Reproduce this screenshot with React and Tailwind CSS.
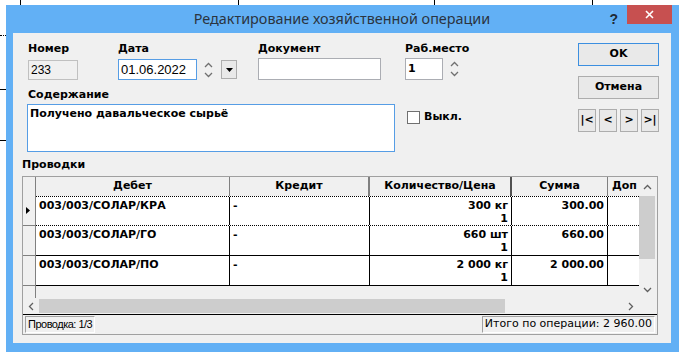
import { useState } from "react";

const rows = [
  { debit: "003/003/СОЛАР/КРА", credit: "-", qty: "300 кг", price: "1", sum: "300.00", current: true },
  { debit: "003/003/СОЛАР/ГО", credit: "-", qty: "660 шт", price: "1", sum: "660.00" },
  { debit: "003/003/СОЛАР/ПО", credit: "-", qty: "2 000 кг", price: "1", sum: "2 000.00" },
];

function Spinner() {
  return (
    <div className="flex flex-col items-center gap-[4px] pt-[3px]">
      <svg width="9" height="6" viewBox="0 0 9 6">
        <polyline points="1,5 4.5,1.5 8,5" fill="none" stroke="#707070" strokeWidth="1.3" />
      </svg>
      <svg width="9" height="6" viewBox="0 0 9 6">
        <polyline points="1,1 4.5,4.5 8,1" fill="none" stroke="#707070" strokeWidth="1.3" />
      </svg>
    </div>
  );
}

function Chevron({ dir }) {
  const pts = {
    up: "1,5 4.5,1.5 8,5",
    down: "1,1 4.5,4.5 8,1",
    left: "5,1 1.5,4.5 5,8",
    right: "1,1 4.5,4.5 1,8",
  }[dir];
  const vertical = dir === "up" || dir === "down";
  return (
    <svg width={vertical ? 9 : 6} height={vertical ? 6 : 9} viewBox={vertical ? "0 0 9 6" : "0 0 6 9"}>
      <polyline points={pts} fill="none" stroke="#606060" strokeWidth="1.3" />
    </svg>
  );
}

function Btn({ children, primary, className = "" }) {
  return (
    <button
      className={`flex items-center justify-center border bg-[#e9e9e9] text-[11px] font-bold text-black ${
        primary ? "border-[#3c8fe0]" : "border-[#adadad]"
      } ${className}`}
    >
      {children}
    </button>
  );
}

export default function App() {
  const [off, setOff] = useState(false);

  return (
    <div className="relative h-[359px] w-[684px] overflow-hidden bg-white font-['DejaVu_Sans',Verdana,sans-serif]">
      {/* grid lines of the window behind */}
      <div className="absolute left-[20px] top-0 h-[5px] w-px bg-black" />
      <div className="absolute left-[238px] top-0 h-[5px] w-px bg-black" />
      <div className="absolute left-[434px] top-0 h-[5px] w-px bg-black" />
      <div className="absolute left-[592px] top-0 h-[5px] w-px bg-black" />
      <div className="absolute left-0 top-[35px] h-px w-[6px] border-t border-dotted border-black" />
      <div className="absolute left-0 top-[89px] h-px w-[6px] bg-black" />
      <div className="absolute left-0 top-[140px] h-px w-[6px] bg-black" />

      <div className="ml-[6px] mt-[5px] flex h-[347px] w-[673px] flex-col bg-[#62b0f5] pb-[9px] pl-[7px] pr-[8px]">
        {/* title bar */}
        <div className="relative flex h-[28px] shrink-0 items-center justify-center">
          <span className="font-['Noto_Sans',sans-serif] text-[14.4px] text-[#2b3440]">
            Редактирование хозяйственной операции
          </span>
          <span className="absolute right-[53px] top-[4px] font-['Liberation_Sans',sans-serif] text-[14px] font-bold text-[#1f2a36]">?</span>
          <div className="absolute right-[-1px] top-0 flex h-[19px] w-[45px] items-center justify-center bg-[#c75050]">
            <svg width="9" height="9" viewBox="0 0 9 9">
              <path d="M1 1 L8 8 M8 1 L1 8" stroke="white" strokeWidth="1.6" />
            </svg>
          </div>
        </div>

        {/* client area */}
        <div className="flex flex-1 flex-col bg-[#f0f0f0] text-black">
          <div className="flex h-[124px] shrink-0">
            <div className="flex flex-col pl-[15px] pt-[9px]">
              <div className="flex">
                <div className="flex w-[90px] flex-col">
                  <div className="h-[16px] text-[11px] font-bold leading-[14px]">Номер</div>
                  <div className="mt-[2px] flex h-[20px] w-[50px] items-center border border-[#c0c0c0] bg-[#f0f0f0] pl-[2px] font-['Liberation_Sans',sans-serif] text-[12px]">
                    233
                  </div>
                </div>
                <div className="flex w-[140px] flex-col">
                  <div className="h-[16px] text-[11px] font-bold leading-[14px]">Дата</div>
                  <div className="mt-[1px] flex items-start">
                    <div className="flex h-[21px] w-[79px] items-center border border-[#569de5] bg-white pl-[2px] font-['Liberation_Sans',sans-serif] text-[13px]">
                      01.06.2022
                    </div>
                    <div className="ml-[6px] w-[10px]">
                      <Spinner />
                    </div>
                    <div className="ml-[8px] mt-px flex h-[19px] w-[16px] items-center justify-center border border-[#adadad] bg-[#e9e9e9]">
                      <svg width="7" height="4" viewBox="0 0 7 4">
                        <path d="M0 0 H7 L3.5 4 Z" fill="black" />
                      </svg>
                    </div>
                  </div>
                </div>
                <div className="flex w-[147px] flex-col">
                  <div className="h-[16px] text-[11px] font-bold leading-[14px]">Документ</div>
                  <div className="h-[22px] w-[123px] border border-[#abadb3] bg-white" />
                </div>
                <div className="flex flex-col">
                  <div className="h-[16px] text-[11px] font-bold leading-[14px]">Раб.место</div>
                  <div className="flex items-start">
                    <div className="flex h-[22px] w-[38px] items-center border border-[#abadb3] bg-white pl-[2px] text-[11px] font-bold">
                      1
                    </div>
                    <div className="ml-[6px] w-[10px]">
                      <Spinner />
                    </div>
                  </div>
                </div>
              </div>

              <div className="mt-[8px] h-[16px] text-[11px] font-bold leading-[14px]">Содержание</div>
              <div className="flex items-start">
                <div className="-ml-px h-[48px] w-[368px] border border-[#569de5] bg-white px-[2px] pt-[2px] text-[11px] font-bold leading-[14px]">
                  Получено давальческое сырьё
                </div>
                <label className="ml-[12px] mt-[5px] flex items-center gap-[4px] text-[11px] font-bold">
                  <button
                    onClick={() => setOff(!off)}
                    className="h-[13px] w-[13px] border border-[#707070] bg-white"
                  />
                  Выкл.
                </label>
              </div>
            </div>

            <div className="ml-auto mr-[12px] flex w-[81px] flex-col pt-[10px]">
              <Btn primary className="h-[23px]">OK</Btn>
              <Btn className="mt-[10px] h-[23px]">Отмена</Btn>
              <div className="mt-[10px] flex gap-[3px]">
                <Btn className="h-[23px] w-[18px]">|&lt;</Btn>
                <Btn className="h-[23px] w-[18px]">&lt;</Btn>
                <Btn className="h-[23px] w-[18px]">&gt;</Btn>
                <Btn className="h-[23px] w-[18px]">&gt;|</Btn>
              </div>
            </div>
          </div>

          <div className="h-[19px] pl-[9px] pt-[1px] text-[11px] font-bold leading-[14px]">Проводки</div>

          {/* grid */}
          <div className="ml-[9px] flex h-[159px] w-[636px] flex-col border border-[#a0a0a0]">
            <div className="flex h-[121px]">
              <div className="flex w-[616px] flex-col overflow-hidden">
                <div className="flex h-[19px] shrink-0 bg-[#f0f0f0] text-[11px] font-bold">
                  <div className="w-[13px] shrink-0 border-r border-[#808080]" />
                  <div className="flex w-[194px] shrink-0 items-center justify-center border-r border-[#808080]">Дебет</div>
                  <div className="flex w-[140px] shrink-0 items-center justify-center border-r-2 border-[#808080]">Кредит</div>
                  <div className="flex w-[142px] shrink-0 items-center justify-center border-r-2 border-[#505050]">Количество/Цена</div>
                  <div className="flex w-[96px] shrink-0 items-center justify-center border-r border-[#808080]">Сумма</div>
                  <div className="flex shrink-0 items-center whitespace-nowrap pl-[4px]">Доп</div>
                </div>
                {rows.map((r) => (
                  <div key={r.debit} className="flex h-[30px] shrink-0 text-[11px] font-bold leading-[13px]">
                    <div className="flex w-[13px] shrink-0 items-center border-b border-r border-[#808080] bg-[#f0f0f0] pl-[3px]">
                      {r.current && (
                        <svg width="4" height="7" viewBox="0 0 4 7">
                          <path d="M0 0 L4 3.5 L0 7 Z" fill="black" />
                        </svg>
                      )}
                    </div>
                    <div
                      className={`flex flex-1 bg-white ${
                        r.current ? "border-y border-dotted border-black" : "border-b border-black"
                      }`}
                    >
                      <div className="w-[194px] shrink-0 border-r border-black pl-[3px] pt-[2px]">{r.debit}</div>
                      <div className="w-[140px] shrink-0 border-r border-black pl-[3px] pt-[2px]">{r.credit}</div>
                      <div className="flex w-[142px] shrink-0 flex-col items-end border-r border-black pr-[3px] pt-[2px]">
                        <span>{r.qty}</span>
                        <span>{r.price}</span>
                      </div>
                      <div className="w-[96px] shrink-0 border-r border-black pr-[3px] pt-[2px] text-right">{r.sum}</div>
                      <div className="flex-1" />
                    </div>
                  </div>
                ))}
                <div className="flex flex-1">
                  <div className="w-[13px] border-r border-[#808080]" />
                </div>
              </div>
              <div className="flex w-[16px] flex-col bg-[#f0f0f0]">
                <div className="flex h-[19px] items-center justify-center">
                  <Chevron dir="up" />
                </div>
                <div className="h-[63px] bg-[#cdcdcd]" />
                <div className="flex-1" />
                <div className="flex h-[17px] items-center justify-center">
                  <Chevron dir="down" />
                </div>
              </div>
            </div>
            <div className="flex h-[16px] bg-[#f0f0f0]">
              <div className="flex w-[16px] items-center justify-center">
                <Chevron dir="left" />
              </div>
              <div className="my-px w-[466px] bg-[#cdcdcd]" />
              <div className="flex-1" />
              <div className="flex w-[16px] items-center justify-center">
                <Chevron dir="right" />
              </div>
              <div className="w-[18px]" />
            </div>
            <div className="flex flex-1 items-center border-t border-black bg-[#f0f0f0] px-[2px] text-[11px]">
              <div className="flex h-[17px] items-center border border-b-white border-l-[#a0a0a0] border-r-white border-t-[#a0a0a0] px-[2px] font-['Liberation_Sans',sans-serif] tracking-[-0.5px]">
                Проводка: 1/3
              </div>
              <div className="ml-auto flex h-[17px] items-center border border-b-white border-l-[#a0a0a0] border-r-white border-t-[#a0a0a0] px-[2px]">
                Итого по операции: 2 960.00
              </div>
            </div>
          </div>
        </div>
      </div>
    </div>
  );
}
